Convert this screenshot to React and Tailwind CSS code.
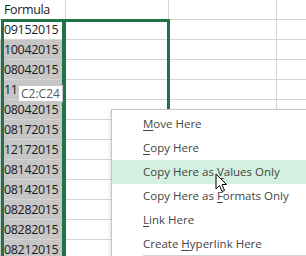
import React from 'react';

const values = [
  '09152015',
  '10042015',
  '08042015',
  '11',
  '08042015',
  '08172015',
  '12172015',
  '08142015',
  '08142015',
  '08282015',
  '08282015',
  '08212015',
];

const menuItems = [
  { pre: '', key: 'M', post: 'ove Here' },
  { pre: '', key: 'C', post: 'opy Here' },
  { pre: 'Copy Here as ', key: 'V', post: 'alues Only', active: true },
  { pre: 'Copy Here as ', key: 'F', post: 'ormats Only' },
  { pre: '', key: 'L', post: 'ink Here' },
  { pre: 'Create ', key: 'H', post: 'yperlink Here' },
];

const Row = ({ children, shaded }) => (
  <div className="flex h-[20px] border-b border-[#d4d4d4]">
    <div
      className={`w-[66px] shrink-0 border-r border-[#d4d4d4] pl-[4px] flex items-center pt-[1px] text-[12.5px] tracking-[-0.35px] text-[#1a1a1a] ${
        shaded ? 'bg-[#c6c6c6]' : 'bg-white'
      }`}
    >
      {children}
    </div>
    <div className="w-[103px] shrink-0 border-r border-[#d4d4d4]" />
    <div className="w-[108px] shrink-0 border-r border-[#d4d4d4]" />
    <div className="flex-1" />
  </div>
);

const App = () => {
  return (
    <div className="relative w-[306px] h-[256px] overflow-hidden bg-white font-['Open_Sans',sans-serif]">
      <div className="flex flex-col">
        <Row>Formula</Row>
        {values.map((v, i) => (
          <Row key={i} shaded={i > 0}>
            {v}
          </Row>
        ))}
      </div>

      {/* selection outlines */}
      <div className="absolute left-[1px] top-[19px] w-[169px] h-[260px] border-[3px] border-[#217346]" />
      <div className="absolute left-[62px] top-[19px] w-[4px] h-[260px] bg-[#217346]" />

      {/* range tooltip */}
      <div className="absolute left-[18px] top-[85px] h-[17px] px-[2px] bg-white border border-[#c8c8c8] text-[12px] leading-[15px] text-[#575757]">
        C2:C24
      </div>

      {/* context menu */}
      <div className="absolute left-[111px] top-[109px] w-[220px] bg-white border border-[#c6c6c6] pt-[2px] shadow-[-1px_1px_3px_rgba(0,0,0,0.12)]">
        {menuItems.map((item, i) => (
          <div
            key={i}
            className={`h-[24px] flex items-center pl-[31px] text-[11.5px] text-[#444] ${
              item.active ? 'bg-[#d3f0e0]' : ''
            }`}
          >
            <span>
              {item.pre}
              <span className="underline underline-offset-[2px]">{item.key}</span>
              {item.post}
            </span>
          </div>
        ))}
        <div className="ml-[31px] -mt-[1px] border-t border-[#d4d4d4]" />
      </div>

      {/* mouse pointer */}
      <svg
        className="absolute left-[215px] top-[173px]"
        width="13"
        height="21"
        viewBox="0 0 13 21"
      >
        <path
          d="M1 1 L1 16 L4.5 12.5 L7 18.5 L9.5 17.5 L7 11.5 L11.5 11.5 Z"
          fill="white"
          stroke="black"
          strokeWidth="1"
          strokeLinejoin="miter"
        />
      </svg>
    </div>
  );
};

export default App;
